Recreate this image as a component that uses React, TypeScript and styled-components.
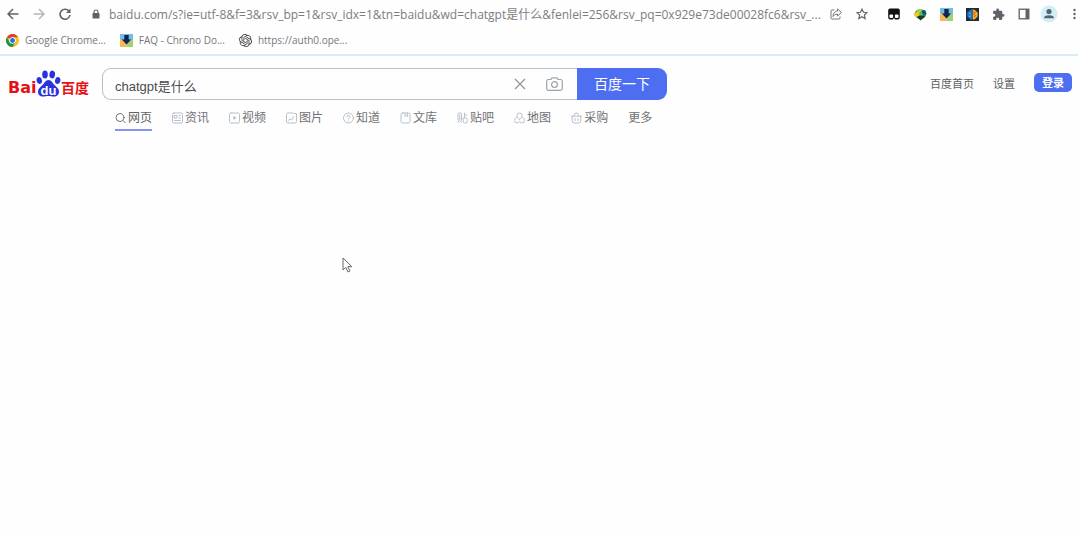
import React from "react";
import styled, { createGlobalStyle } from "styled-components";
import { SiOpenai } from "react-icons/si";

const GlobalStyle = createGlobalStyle`
  * { box-sizing: border-box; }
  body { margin: 0; background: #fefefe; font-family: "Liberation Sans", "Noto Sans CJK SC", sans-serif; }
  button, input { font: inherit; color: inherit; }
  button { border: 0; padding: 0; background: none; cursor: pointer; }
  a { color: inherit; text-decoration: none; }
  svg { display: block; flex: none; }
`;

const BrowserBar = styled.header`
  border-bottom: 2px solid #d3eef4;
  font-family: "Open Sans", "Noto Sans CJK SC", sans-serif;
`;

const AddressRow = styled.div`
  display: flex;
  align-items: center;
  height: 28px;
  padding-left: 6px;
`;

const Tools = styled.div<{ $gap: number }>`
  display: flex;
  flex: none;
  align-items: center;
  gap: ${(p) => p.$gap}px;
`;

const ToolButton = styled.button`
  display: grid;
  place-items: center;
  min-width: 14px;
  height: 18px;
`;

const LockButton = styled(ToolButton)`
  margin: 0 6px 0 17px;
`;

const AddressInput = styled.input`
  flex: 1;
  min-width: 0;
  height: 24px;
  padding: 0;
  border: 0;
  outline: 0;
  background: transparent;
  color: #7b7d82;
  font-size: 12px;
  text-overflow: ellipsis;
`;

const Extensions = styled(Tools)`
  margin: 0 9px 0 18px;
`;

const MoreButton = styled(ToolButton)`
  min-width: 8px;
`;

const Bookmarks = styled.nav`
  display: flex;
  align-items: center;
  gap: 14px;
  height: 26px;
  padding: 0 6px 2px;
`;

const Bookmark = styled.a`
  display: flex;
  align-items: center;
  gap: 6px;
  color: #75777b;
  font-size: 10px;
  line-height: 16px;
  white-space: nowrap;
`;

const SearchHeader = styled.div`
  display: flex;
  align-items: flex-start;
  padding: 12px 6px 0 8px;
`;

const Logo = styled.a`
  display: flex;
  flex: none;
  align-items: flex-end;
  width: 94px;
  height: 29px;
  color: #e60f14;
  font-weight: 700;
`;

const LogoLatin = styled.span`
  width: 28px;
  font-family: "DejaVu Sans", sans-serif;
  font-size: 16px;
  line-height: 18px;
`;

const LogoHan = styled.span`
  font-family: "Noto Sans CJK SC", sans-serif;
  font-size: 14px;
  line-height: 20px;
  white-space: nowrap;
`;

const SearchForm = styled.form`
  display: flex;
  flex: 0 1 565px;
  min-width: 0;
  height: 32px;
`;

const SearchBox = styled.div`
  display: flex;
  flex: 1;
  min-width: 0;
  align-items: center;
  gap: 20px;
  padding: 0 14px 0 12px;
  border: 1px solid #b4c2c8;
  border-right: 0;
  border-radius: 9px 0 0 9px;
`;

const SearchInput = styled.input`
  flex: 1;
  min-width: 0;
  height: 28px;
  padding: 2px 0 0;
  border: 0;
  outline: 0;
  background: transparent;
  color: #4a4b50;
  font-size: 13px;
`;

const SearchButton = styled.button`
  flex: none;
  width: 90px;
  padding-bottom: 3px;
  border-radius: 0 9px 9px 0;
  background: #4e6ef2;
  color: #fff;
  font-size: 14px;
`;

const UserNav = styled.nav`
  display: flex;
  flex: none;
  align-items: flex-start;
  gap: 19px;
  margin: 5px 0 0 auto;
  color: #5d5e62;
  font-size: 11px;
  line-height: 22px;
  white-space: nowrap;
`;

const LoginButton = styled.button`
  width: 38px;
  height: 19px;
  border-radius: 5px;
  background: #4e6ef2;
  color: #fff;
  font-weight: 700;
  line-height: 18px;
`;

const Tabs = styled.nav`
  display: flex;
  gap: 20px;
  padding: 7px 16px 0 115px;
`;

const Tab = styled.a<{ $active?: boolean }>`
  display: flex;
  align-items: center;
  gap: 2px;
  height: 24px;
  padding-bottom: 1px;
  border-bottom: 2px solid ${(p) => (p.$active ? "#8591f5" : "transparent")};
  color: ${(p) => (p.$active ? "#5f6165" : "#707276")};
  font-size: 12px;
  line-height: 18px;
  white-space: nowrap;
`;

const Pointer = styled.svg`
  position: absolute;
  left: 342px;
  top: 257px;
  pointer-events: none;
`;

const TabIcon = ({ color = "#b7c0cc", children }: { color?: string; children: React.ReactNode }) => (
  <svg width="11" height="12" viewBox="0 0 11 12" fill="none" stroke={color} strokeWidth="1" strokeLinecap="round" strokeLinejoin="round">
    {children}
  </svg>
);

const tabs: { label: string; active?: boolean; icon?: React.ReactNode }[] = [
  { label: "网页", active: true, icon: <TabIcon color="#707278"><circle cx="5" cy="5.5" r="4" /><path d="M8 8.5l2.300 2.300" /></TabIcon> },
  { label: "资讯", icon: <TabIcon><rect x=".5" y="1" width="10" height="10" rx="1.500" /><path d="M2.500 3.500h2.500v2.500H2.500zM7 3.500h1.500M7 6h1.500M2.500 8.500h6" /></TabIcon> },
  { label: "视频", icon: <TabIcon><rect x=".5" y="1" width="10" height="10" rx="1.500" /><path d="M4.800 4.800v2.400L6.600 6z" fill="#b7c0cc" /></TabIcon> },
  { label: "图片", icon: <TabIcon><path d="M7 1H2Q.5 1 .5 2.500v7Q.5 11 2 11h7q1.500 0 1.500-1.500V1.500H8.500M2.500 8.500l1.500-1.500 1.500 1 2.500-3.500" /></TabIcon> },
  { label: "知道", icon: <TabIcon><circle cx="5.500" cy="6" r="5" /><path d="M4 4.800q0-1.500 1.500-1.500T7 4.800q0 .8-.8 1.200t-.7 1" /><path d="M5.500 8.800v.1" /></TabIcon> },
  { label: "文库", icon: <TabIcon><rect x="1" y="1" width="9" height="10" rx="1.500" /><path d="M5 1v3.500l1.300-1 1.300 1V1" /></TabIcon> },
  { label: "贴吧", icon: <TabIcon><path d="M1 8V2q0-1 1-1h1.500q1 0 1 1v6M2.800 3v4q0 2-2 3.500M3.500 9l1 1.500M7.500 1v4.500M7.500 3H10M6.300 6H9q1.200 0 1.200 1.200v2.300Q10.200 11 9 11H7.500q-1.200 0-1.200-1.500z" /></TabIcon> },
  { label: "地图", icon: <TabIcon><path d="M5.500 7.500Q2.800 5 2.800 3.600 2.800 1 5.500 1t2.700 2.600Q8.200 5 5.500 7.500z" /><path d="M2.500 5Q.5 6.500.5 8.500.5 11 3 11l2.500-1.300L8 11q2.500 0 2.500-2.500 0-2-2-3.500" /></TabIcon> },
  { label: "采购", icon: <TabIcon><path d="M.5 4.200h10M1.200 4.200v4.300Q1.200 11 3.500 11h4q2.300 0 2.300-2.500V4.200M2.800 4L4.500 1h2L8.200 4M4 6.500v2M7 6.500v2" /></TabIcon> },
  { label: "更多" },
];

const BackIcon = ({ color, flip }: { color: string; flip?: boolean }) => (
  <svg width="12" height="12" viewBox="0 0 12 12" fill="none" stroke={color} strokeWidth="1.500">
    <path d={flip ? "M.5 6h10.500M6 1l5 5-5 5" : "M11.500 6H1M6 1L1 6l5 5"} />
  </svg>
);

const ReloadIcon = () => (
  <svg width="12" height="12" viewBox="0 0 12 12" fill="none" stroke="#5f6368" strokeWidth="1.600">
    <path d="M10.300 3.600A5 5 0 1 0 11 7" />
    <path d="M11.500.5v4.600H7z" fill="#5f6368" stroke="none" />
  </svg>
);

const LockIcon = () => (
  <svg width="8" height="10" viewBox="0 0 8 10">
    <rect x=".5" y="4" width="7" height="5.500" rx=".8" fill="#5f6368" />
    <path d="M2 4.500V3q0-2 2-2t2 2v1.500" fill="none" stroke="#5f6368" strokeWidth="1.100" />
  </svg>
);

const ShareIcon = () => (
  <svg width="12" height="12" viewBox="0 0 12 12" fill="none" stroke="#74787d" strokeWidth="1" strokeLinejoin="round">
    <path d="M4.500 2H2Q1 2 1 3v7q0 1 1 1h7q1 0 1-1V8.500" />
    <path d="M7.500 1l4 3.500-4 3.500V6Q4.500 6 3 8.500 3.300 3.500 7.500 3z" />
  </svg>
);

const StarIcon = () => (
  <svg width="12" height="12" viewBox="0 0 12 12" fill="none" stroke="#5f6368" strokeWidth="1.200">
    <path d="M6 1.200l1.500 3.100 3.500.4-2.600 2.300.7 3.500L6 8.800l-3.100 1.700.7-3.500L1 4.700l3.500-.4z" />
  </svg>
);

const MaskIcon = () => (
  <svg width="12" height="12" viewBox="0 0 12 12">
    <path d="M2 .5h8Q11.800.5 11.800 2.500V9q0 2.500-2 2.500H2.200Q.2 11.500.2 9V2.500Q.2.500 2 .5z" fill="#111" />
    <rect x="1.500" y="6.500" width="3.600" height="3.600" rx="1" fill="#fff" />
    <rect x="6.900" y="6.500" width="3.600" height="3.600" rx="1" fill="#fff" />
    <path d="M5.200 10.500h1.600V12H5.200z" fill="#fff" />
  </svg>
);

const GlobeIcon = () => (
  <svg width="14" height="13" viewBox="0 0 14 13">
    <ellipse cx="7.500" cy="6" rx="5.800" ry="4.800" fill="#2c9a3b" />
    <path d="M4 2.500Q7 .2 10 1.300L7 5 3.500 5z" fill="#a8d23c" />
    <path d="M8.500 3.200L12 2l1.500 3.500-3.500 2z" fill="#194a8c" />
    <path d="M.3 6.500l4-3 3 3-4 3z" fill="#f1c52c" />
    <path d="M4 9l4.500-2.500L12 8.500l-4.500 4z" fill="#1b3823" />
    <path d="M6 7.500l2.500-4 2 4z" fill="#51c84d" />
  </svg>
);

const ChronoIcon = () => (
  <svg width="13" height="13" viewBox="0 0 13 13">
    <path d="M0 0h13v6H0z" fill="#72bfdf" />
    <path d="M0 5l6.500 3V13H0z" fill="#f8b654" />
    <path d="M13 5L6.500 8V13H13z" fill="#a4cf75" />
    <path d="M4.300 1h4.400v4.500h2.500L6.500 10.500 1.800 5.500h2.500z" fill="#102550" />
  </svg>
);

const BrainIcon = () => (
  <svg width="13" height="13" viewBox="0 0 13 13">
    <path d="M0 0h13v13H0z" fill="#252a35" />
    <path d="M6.300 1.500v10Q4 12 3 10 1 9.500 1.300 7 .8 4 3 3.300 4 1 6.300 1.500z" fill="#1976d7" />
    <path d="M6.700 1.500v10Q9 12 10 10 12 9.500 11.700 7 12.200 4 10 3.300 9 1 6.700 1.500z" fill="#f2b325" />
    <path d="M3 5l2 1M3 8.500L5 8" stroke="#58bdf1" />
    <path d="M7.500 4l2 .5M8 8.500l2-1M7 6h2" stroke="#d84b28" />
  </svg>
);

const PuzzleIcon = () => (
  <svg width="13" height="13" viewBox="0 0 24 24" fill="#5f6368">
    <path d="M20.500 11H19V7a2 2 0 0 0-2-2h-4V3.500a2.500 2.500 0 0 0-5 0V5H4a2 2 0 0 0-2 2v3.800h1.500a2.700 2.700 0 0 1 0 5.400H2V20a2 2 0 0 0 2 2h3.800v-1.500a2.700 2.700 0 0 1 5.400 0V22H17a2 2 0 0 0 2-2v-4h1.500a2.500 2.500 0 0 0 0-5z" />
  </svg>
);

const PanelIcon = () => (
  <svg width="12" height="12" viewBox="0 0 12 12">
    <rect x="1.200" y="1.200" width="9.600" height="9.600" fill="none" stroke="#5f6368" strokeWidth="1.300" />
    <path d="M7.500 1H11v10H7.500z" fill="#5f6368" />
  </svg>
);

const AvatarIcon = () => (
  <svg width="18" height="18" viewBox="0 0 18 18">
    <circle cx="9" cy="9" r="8.500" fill="#d3eef4" />
    <circle cx="9" cy="6.500" r="2.600" fill="#566372" />
    <path d="M4 13.300q0-3 5-3t5 3z" fill="#566372" />
  </svg>
);

const DotsIcon = () => (
  <svg width="3" height="12" viewBox="0 0 3 12" fill="#5f6368">
    <circle cx="1.500" cy="2" r="1.200" />
    <circle cx="1.500" cy="6" r="1.200" />
    <circle cx="1.500" cy="10" r="1.200" />
  </svg>
);

const ChromeIcon = () => (
  <svg width="13" height="13" viewBox="0 0 24 24">
    <circle cx="12" cy="12" r="12" fill="#fbc116" />
    <path d="M12 12L1.600 6A12 12 0 0 1 22.400 6H12z" fill="#e33b2e" />
    <path d="M1.600 6A12 12 0 0 0 12 24l5.200-9L12 12 6.800 15z" fill="#229342" />
    <circle cx="12" cy="12" r="6" fill="#fff" />
    <circle cx="12" cy="12" r="4.500" fill="#1a73e8" />
  </svg>
);

const PawIcon = () => (
  <svg width="25" height="27" viewBox="0 0 25 27">
    <g fill="#2932e1">
      <ellipse cx="3.300" cy="10.500" rx="2.700" ry="3.500" transform="rotate(-12 3.300 10.500)" />
      <ellipse cx="9" cy="4.500" rx="2.800" ry="3.900" />
      <ellipse cx="16.200" cy="4.500" rx="2.800" ry="3.900" transform="rotate(8 16.200 4.500)" />
      <ellipse cx="21.700" cy="10.500" rx="2.700" ry="3.500" transform="rotate(12 21.700 10.500)" />
      <path d="M12.500 10c3 0 4 3 6 5s4.500 3.500 4.500 6.500-2 5-5 5c-2 0-3.500-.5-5.500-.5s-3.500.5-5.500.5c-3 0-5-2-5-5s2.500-4.500 4.500-6.500 3-5 6-5z" />
    </g>
    <text x="12.500" y="24.500" textAnchor="middle" fill="#fff" fontFamily="Liberation Sans, sans-serif" fontSize="13" fontWeight="700">du</text>
  </svg>
);

const CloseIcon = () => (
  <svg width="12" height="12" viewBox="0 0 12 12" fill="none" stroke="#92959d" strokeWidth="1.300">
    <path d="M1 1l10 10M11 1L1 11" />
  </svg>
);

const CameraIcon = () => (
  <svg width="17" height="14" viewBox="0 0 17 14" fill="none" stroke="#96a5b0" strokeWidth="1.200" strokeLinejoin="round">
    <path d="M5 2.500L6 .8h5l1 1.700h2.500q1.800 0 1.800 1.800v7.200q0 1.800-1.800 1.800h-12Q.7 13.300.7 11.500V4.300Q.7 2.500 2.500 2.500z" />
    <circle cx="8.500" cy="7.500" r="2.900" />
  </svg>
);

const extensions = [
  { label: "Script manager", icon: <MaskIcon /> },
  { label: "Download integration", icon: <GlobeIcon /> },
  { label: "Chrono download manager", icon: <ChronoIcon /> },
  { label: "Brain extension", icon: <BrainIcon /> },
  { label: "Extensions", icon: <PuzzleIcon /> },
  { label: "Side panel", icon: <PanelIcon /> },
];

const bookmarks = [
  { label: "Google Chrome...", icon: <ChromeIcon /> },
  { label: "FAQ - Chrono Do...", icon: <ChronoIcon /> },
  { label: "https://auth0.ope...", icon: <SiOpenai size={13} color="#3c3f42" /> },
];

export default function App() {
  return (
    <>
      <GlobalStyle />
      <BrowserBar>
        <AddressRow>
          <Tools $gap={12}>
            <ToolButton aria-label="Back"><BackIcon color="#5f6368" /></ToolButton>
            <ToolButton aria-label="Forward"><BackIcon color="#b3b7ba" flip /></ToolButton>
            <ToolButton aria-label="Reload"><ReloadIcon /></ToolButton>
          </Tools>
          <LockButton aria-label="Site information"><LockIcon /></LockButton>
          <AddressInput
            aria-label="Address"
            defaultValue="baidu.com/s?ie=utf-8&f=3&rsv_bp=1&rsv_idx=1&tn=baidu&wd=chatgpt是什么&fenlei=256&rsv_pq=0x929e73de00028fc6&rsv_..."
          />
          <Tools $gap={12}>
            <ToolButton aria-label="Share"><ShareIcon /></ToolButton>
            <ToolButton aria-label="Bookmark this page"><StarIcon /></ToolButton>
          </Tools>
          <Extensions $gap={12}>
            {extensions.map((item) => (
              <ToolButton key={item.label} aria-label={item.label}>{item.icon}</ToolButton>
            ))}
          </Extensions>
          <Tools $gap={12}>
            <ToolButton aria-label="Profile"><AvatarIcon /></ToolButton>
            <MoreButton aria-label="Menu"><DotsIcon /></MoreButton>
          </Tools>
        </AddressRow>
        <Bookmarks aria-label="Bookmarks">
          {bookmarks.map((item) => (
            <Bookmark key={item.label} href="#">{item.icon}{item.label}</Bookmark>
          ))}
        </Bookmarks>
      </BrowserBar>
      <main>
        <SearchHeader>
          <Logo href="#">
            <LogoLatin>Bai</LogoLatin>
            <PawIcon />
            <LogoHan>百度</LogoHan>
          </Logo>
          <SearchForm onSubmit={(e) => e.preventDefault()}>
            <SearchBox>
              <SearchInput aria-label="搜索" defaultValue="chatgpt是什么" />
              <button type="button" aria-label="清空"><CloseIcon /></button>
              <button type="button" aria-label="按图片搜索"><CameraIcon /></button>
            </SearchBox>
            <SearchButton type="submit">百度一下</SearchButton>
          </SearchForm>
          <UserNav aria-label="用户">
            <a href="#">百度首页</a>
            <a href="#">设置</a>
            <LoginButton>登录</LoginButton>
          </UserNav>
        </SearchHeader>
        <Tabs aria-label="搜索类别">
          {tabs.map((tab) => (
            <Tab key={tab.label} href="#" $active={tab.active}>{tab.icon}{tab.label}</Tab>
          ))}
        </Tabs>
      </main>
      <Pointer width="11" height="17" viewBox="0 0 11 17">
        <path d="M1 1v12l2.800-2.600 2.200 4.600 2-1-2.200-4.300h4z" fill="#fff" stroke="#66676f" strokeWidth="1" />
      </Pointer>
    </>
  );
}
